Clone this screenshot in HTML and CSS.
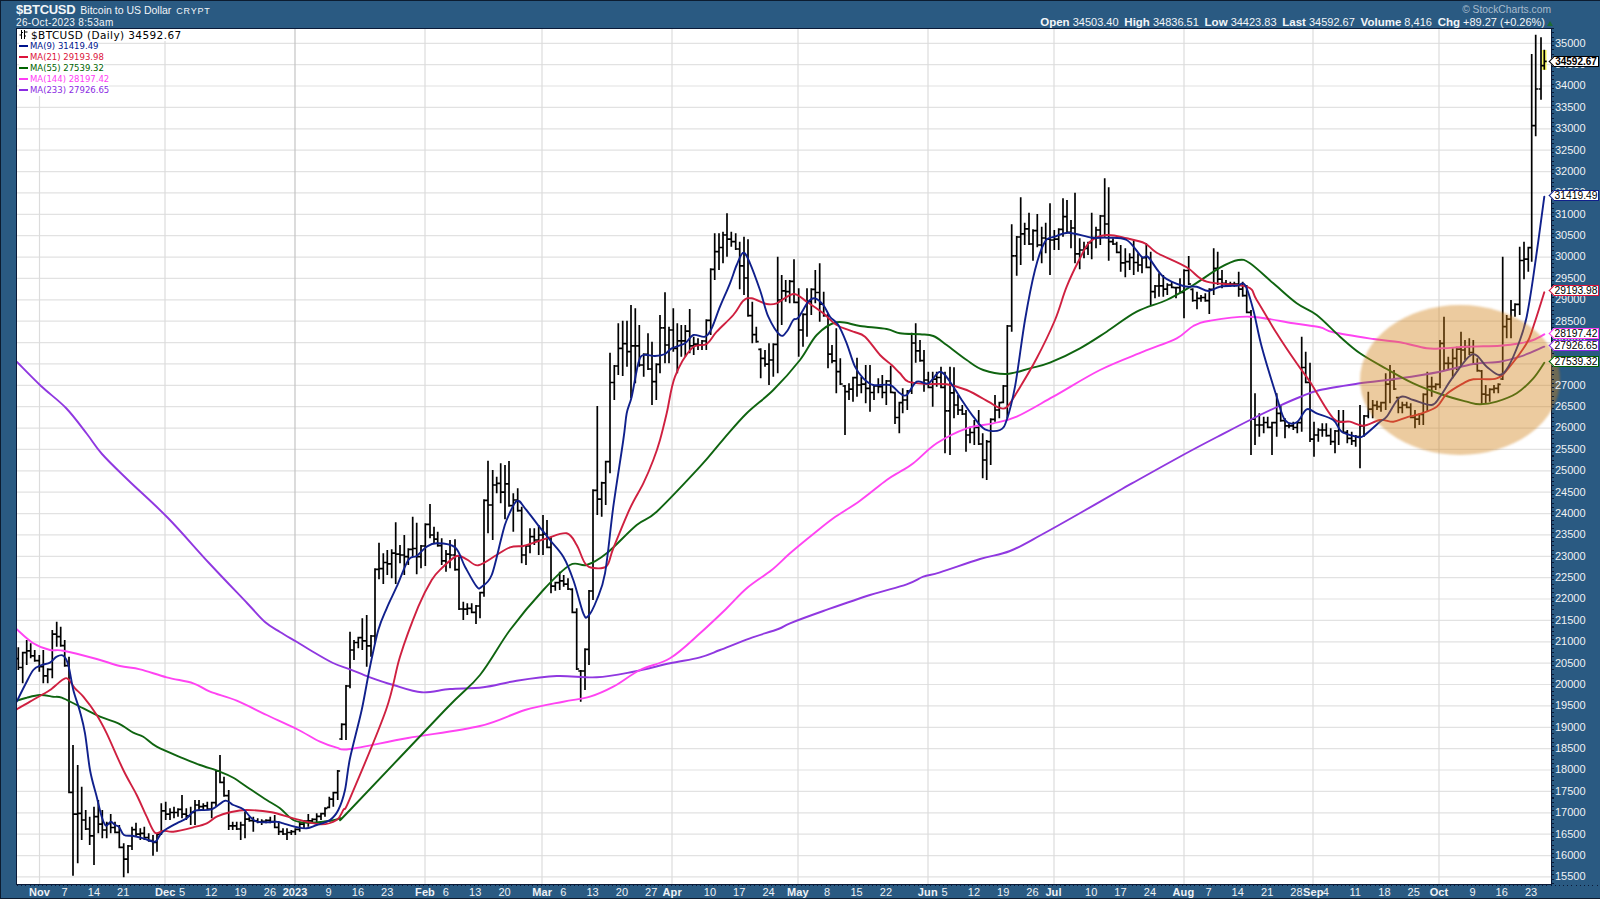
FILE: index.html
```html
<!DOCTYPE html>
<html lang="en">
<head>
<meta charset="utf-8">
<title>$BTCUSD</title>
<link rel="stylesheet" href="styles.css">
</head>
<body>
<div class="page">
  <header class="head">
    <div class="head-left">
      <div class="title"><b class="sym">$BTCUSD</b><span class="name">Bitcoin to US Dollar</span><span class="exch">CRYPT</span></div>
      <div class="date">26-Oct-2023 8:53am</div>
    </div>
    <div class="head-right">
      <div class="brand">© StockCharts.com</div>
      <div class="quote"><b>Open</b> 34503.40 <b>High</b> 34836.51 <b>Low</b> 34423.83 <b>Last</b> 34592.67 <b>Volume</b> 8,416 <b>Chg</b> +89.27 (+0.26%)<i class="up"></i></div>
    </div>
  </header>
  <main class="chart">
    <div class="plot">
      <svg id="chart" class="plot-svg" viewBox="17 29 1534 855" width="1534" height="855"></svg>
      <div class="legend">
        <div class="lg lg-main"><svg class="lg-icon" viewBox="0 0 9 9" width="9" height="9"><path d="M2.5 0V9M5.500 0V9M0.500 5H2.500M2.500 2.500H4M5.500 6H7M5.500 2H8.500" stroke="#000" fill="none"/></svg><span>$BTCUSD (Daily) 34592.67</span></div>
        <div class="lg c9"><i></i><span>MA(9) 31419.49</span></div>
        <div class="lg c21"><i></i><span>MA(21) 29193.98</span></div>
        <div class="lg c55"><i></i><span>MA(55) 27539.32</span></div>
        <div class="lg c144"><i></i><span>MA(144) 28197.42</span></div>
        <div class="lg c233"><i></i><span>MA(233) 27926.65</span></div>
      </div>
    </div>
    <div class="yaxis">
      <span>35000</span><span>34500</span><span>34000</span><span>33500</span><span>33000</span><span>32500</span><span>32000</span><span>31500</span>
      <span>31000</span><span>30500</span><span>30000</span><span>29500</span><span>29000</span><span>28500</span><span>28000</span><span>27500</span>
      <span>27000</span><span>26500</span><span>26000</span><span>25500</span><span>25000</span><span>24500</span><span>24000</span><span>23500</span>
      <span>23000</span><span>22500</span><span>22000</span><span>21500</span><span>21000</span><span>20500</span><span>20000</span><span>19500</span>
      <span>19000</span><span>18500</span><span>18000</span><span>17500</span><span>17000</span><span>16500</span><span>16000</span><span>15500</span>
      <div class="tag t-last">34592.67</div>
      <div class="tag t9">31419.49</div>
      <div class="tag t21">29193.98</div>
      <div class="tag t144">28197.42</div>
      <div class="tag t233">27926.65</div>
      <div class="tag t55">27539.32</div>
    </div>
  </main>
  <div class="xaxis" id="xaxis"></div>
  <div class="highlight"></div>
</div>
<script src="chart.js"></script>
</body>
</html>
```
FILE: styles.css
```css
* { box-sizing: border-box; }
html, body { margin: 0; padding: 0; background: #fff; }
body { font-family: "Liberation Sans", Arial, sans-serif; }
.page {
  position: relative;
  width: 1600px;
  height: 899px;
  background: #2a5a82;
  border-top: 1px solid #0c1c30;
  border-left: 1px solid #0c1c30;
  border-bottom: 1px solid #0c1c30;
  color: #f2f5f8;
  overflow: hidden;
  display: flex;
  flex-direction: column;
}
.head {
  height: 27px;
  padding: 0 47px 0 15px;
  display: flex;
  justify-content: space-between;
}
.head-left, .head-right { display: flex; flex-direction: column; }
.head-right { align-items: flex-end; }
.title { display: flex; align-items: baseline; height: 16px; line-height: 17px; }
.sym { font-size: 13px; letter-spacing: -.3px; }
.name { font-size: 10.500px; margin-left: 5px; }
.exch { font-size: 9px; margin-left: 5px; letter-spacing: .75px; }
.date { font-size: 10px; letter-spacing: .33px; line-height: 11px; }
.brand { font-size: 10.300px; height: 15px; line-height: 18px; color: #a9bccd; padding-right: 2px; }
.quote { font-size: 11px; line-height: 12px; white-space: pre; }
.quote b { font-size: 11.500px; margin-left: 2.700px; }
.up {
  display: inline-block;
  width: 0; height: 0;
  margin-left: 2px;
  border-left: 3.500px solid transparent;
  border-right: 3.500px solid transparent;
  border-bottom: 5px solid #1d6b35;
}
.chart { display: flex; padding-left: 15px; height: 857px; }
.plot {
  position: relative;
  width: 1536px;
  height: 857px;
  border: 1px solid #0a1a38;
  background: #fff;
  flex: none;
}
.plot-svg { display: block; }
.legend {
  position: absolute;
  left: 2px;
  top: 0;
  display: flex;
  flex-direction: column;
  align-items: flex-start;
  font-family: "DejaVu Sans", Verdana, sans-serif;
  font-size: 8.500px;
}
.lg { display: flex; align-items: center; height: 11px; gap: 2px; background: #fff; }
.lg i { width: 9px; height: 2px; display: block; }
.lg-main { font-size: 10.500px; letter-spacing: .4px; height: 11.500px; color: #000; gap: 3px; }
.lg-icon { display: block; }
.c9 { color: #00148c; } .c9 i { background: #00148c; }
.c21 { color: #dc143c; } .c21 i { background: #dc143c; }
.c55 { color: #006400; } .c55 i { background: #006400; }
.c144 { color: #ff3cf5; } .c144 i { background: #ff3cf5; }
.c233 { color: #8a2be2; } .c233 i { background: #8a2be2; }
.yaxis {
  position: relative;
  z-index: 2;
  width: 48px;
  padding: 4.700px 0 0 3px;
  display: flex;
  flex-direction: column;
  font-size: 11px;
  color: #eef2f6;
  background-image: repeating-linear-gradient(to bottom, #0a1a38 0 1px, transparent 1px 4.275px);
  background-size: 2px 100%;
  background-repeat: no-repeat;
}
.yaxis span { height: 21.375px; line-height: 21.375px; display: block; flex: none; }
.tag {
  position: absolute;
  z-index: 1;
  left: 1px;
  width: 46px;
  height: 11px;
  line-height: 9px;
  font-size: 10.300px;
  color: #000;
  background: #fff;
  border: 1px solid;
  text-align: center;
}
.tag::before {
  content: "";
  position: absolute;
  z-index: -1;
  left: -4px;
  top: 1px;
  width: 6px;
  height: 6px;
  background: #fff;
  border-left: 1px solid;
  border-bottom: 1px solid;
  border-color: inherit;
  transform: rotate(45deg);
}
.t-last { top: 28px; font-weight: bold; font-size: 10px; border-color: #000; }
.t9 { top: 162px; border-color: #10208c; }
.t21 { top: 257px; border-color: #dc143c; }
.t144 { top: 300px; border-color: #ff3cf5; }
.t233 { top: 312px; border-color: #8a2be2; }
.t55 { top: 328px; border-color: #006400; }
.xaxis {
  position: relative;
  height: 14px;
  font-size: 11px;
  color: #eef2f6;
  background-image: repeating-linear-gradient(to right, #0a1a38 0 1px, transparent 1px 4.190px);
  background-size: 100% 1px;
  background-repeat: no-repeat;
  background-position: 16px 0;
}
.xaxis span { position: absolute; top: 0; transform: translateX(-50%); line-height: 14px; letter-spacing: .1px; }
.xaxis .m { font-weight: bold; }
.highlight {
  position: absolute;
  left: 1359px;
  top: 304px;
  width: 200px;
  height: 150px;
  border-radius: 50%;
  background: rgba(209,128,23,.41);
  filter: blur(1px);
  z-index: 1;
}
.grid { stroke: #e2e2e2; stroke-width: 1.200; }
.grid-v { stroke: #dcdcdc; }
.grid-y { stroke: #c4c4c4; }
.bars { stroke: #000; stroke-width: 1.700; fill: none; }
.ma { fill: none; stroke-width: 1.900; stroke-linejoin: round; stroke-linecap: round; }
.ma9 { stroke: #10208c; }
.ma21 { stroke: #cf2040; }
.ma55 { stroke: #0f6410; }
.ma144 { stroke: #ff44f2; }
.ma233 { stroke: #9038e0; }
.lastmark { fill: #ffff66; }
```
FILE: chart.js
```js
const NS = "http://www.w3.org/2000/svg";
const svg = document.getElementById("chart");
function el(tag, cls, attrs) {
  const e = document.createElementNS(NS, tag);
  e.setAttribute("class", cls);
  for (const k in attrs) e.setAttribute(k, attrs[k]);
  svg.appendChild(e);
  return e;
}
/* horizontal grid: one line per 500 */
for (let p = 35000; p >= 15500; p -= 500) {
  const y = (43.3 + (35000 - p) * 0.04275).toFixed(1);
  el("line", "grid", { x1: 17, x2: 1551, y1: y, y2: y });
}
/* vertical grid: first of each month */
[39.5, 165, 425, 542, 672, 798, 928, 1054, 1184, 1313, 1439].forEach(x =>
  el("line", "grid grid-v", { x1: x, x2: x, y1: 29, y2: 884 }));
el("line", "grid grid-y", { x1: 295, x2: 295, y1: 29, y2: 884 });
el("rect", "lastmark", { x: 1542, y: 50, width: 4.6, height: 20 });

/* bars: x,high,low[,close] read per section */
const S = [
 [0,590,"55,172,240 68,185,280 80,150,225 92,160,205 104,180,215 118,195,245 130,180,280 143,235,280 157,120,265 170,95,170 182,110,170 194,150,230 207,200,610 219,465,857 233,525,820 245,590,750 257,660,720 269,680,765 282,650,825 295,630,730 307,660,745 320,695,745 332,672,730 345,695,730 358,705,775 371,760,862 384,765,850 396,710,780 408,698,740 421,715,750 433,710,750 446,730,755 459,735,797 471,730,785 484,640,735 497,635,690 510,655,690 522,650,685 534,655,680 546,615,685 559,655,690 572,650,705 585,630,705 597,630,660 610,640,660 622,635,660 635,635,685 648,540,650 660,495,580 672,560,620 686,600,720 698,695,720 710,695,720 722,695,750 735,665,745 748,680,695 760,680,725 773,685,700 785,688,705 798,688,700 811,680,700 824,675,715 836,695,735 849,715,735 861,715,750 874,720,735 886,715,735 899,695,725 912,690,715 925,672,710 937,685,700 950,670,700 963,668,690 975,652,680 988,620,655 1000,605,650 1013,540,630 1025,400,450 1038,285,450"],
 [350,440,"0,575,745 12,600,660 25,590,625 37,535,630 50,525,680 63,585,650 75,385,610 87,308,418 100,340,432 112,330,405 125,328,415 137,247,432 150,315,370 163,285,405 175,325,375 188,230,350 200,248,403 213,315,385 226,250,378 240,192,295 252,260,310 263,275,320 275,295,375 288,330,395 300,300,385 315,298,392 327,345,510 340,485,540 352,490,525 365,490,520 378,495,552 390,455,535 402,178,470 414,62,280 428,90,300 440,110,160 452,70,190 465,75,238 477,63,200 490,160,275 503,145,215 515,200,370 528,315,375 540,265,340 553,265,315 566,255,345 579,225,345 591,240,325 603,290,460 616,425,452 629,395,450 641,405,440 654,415,450 667,445,520 680,505,690 692,690,785 705,625,750 717,450,675 729,148,480 742,-102,225 755,125,230 767,62,195 780,-262,100"],
 [560,200,"163,495,600 175,370,525 188,362,528 201,362,500 213,315,595 226,325,550 238,375,500 251,460,530 264,400,510 276,425,615 289,490,600 300,345,520 315,277,490 327,380,490 340,325,455 352,370,520 364,375,470 376,375,470 389,327,460 401,410,465 414,415,450 426,420,450 439,358,450 452,205,405 464,100,240 477,100,210 489,95,190 501,40,170 514,95,140 527,100,150 539,125,268 552,110,285 564,118,350 577,305,430 589,380,428 602,445,535 615,450,500 627,430,555 640,430,530 653,170,520 665,225,375 677,240,305 689,240,310 702,178,310 716,265,470 729,340,440 741,265,410 754,265,345 766,210,310 779,190,365 791,275,350 804,340,505 816,435,490 829,385,580 841,475,555 855,555,705 867,550,600 879,530,605 891,473,590 904,530,580 917,495,610 930,495,635 942,555,600 955,535,580 967,525,595 979,540,615 992,497,580 1005,575,672 1018,605,700"],
 [900,170,"8,655,730 22,660,720 35,488,672 47,460,578 60,510,575 72,540,665 85,605,655 98,605,710 110,605,650 123,590,655 135,605,850 150,590,855 162,592,745 174,675,735 187,705,735 198,720,845 210,770,820 223,750,825 236,720,825 248,790,925 260,810,930 272,745,885 285,675,755 298,695,745 310,645,700 322,465,745 335,163,485 350,198,317 362,82,285 374,158,225 387,128,225 399,178,272 412,132,232 425,170,280 437,158,250 450,100,315 463,180,240 476,175,240 489,85,200 501,90,190 513,150,235 525,68,280 539,205,298 552,215,265 564,215,255 575,128,268 588,170,235 601,135,225 614,25,200 626,52,272 639,205,225 650,215,250 662,225,305 676,235,322 689,250,300 701,210,315 714,250,305 726,260,310 739,220,295 752,245,405 765,345,385 777,310,380 790,315,380 802,340,375 815,335,355 828,350,385 840,325,370 852,298,445 866,258,345 878,355,395 891,365,418 903,375,395 916,370,395 928,355,432 941,235,375 953,245,345 966,300,355 978,330,350 991,335,350 1003,335,350 1016,305,380 1028,335,380 1040,345,430 1053,420,855 1065,670,825 1078,730,800 1091,740,790 1103,740,775 1116,755,855 1130,670,800 1142,705,755 1155,745,805 1167,760,775 1180,755,780 1192,755,790"],
 [1300,170,"5,500,785 17,545,640 30,578,816 42,755,860 55,775,815 67,760,800 79,760,800 92,775,825 105,780,850 116,720,825 130,720,790 142,780,820 155,785,825 167,795,830 180,705,895 192,735,800 205,665,745 218,690,745 231,692,720 243,695,725 257,610,720 270,585,700 282,600,660 295,680,730 307,695,730 320,695,715 332,700,745 345,720,775 358,730,765 370,670,765 382,605,725 395,620,680 407,640,660 420,510,655 432,440,600 445,560,600 458,535,625 470,530,600 483,485,590 495,510,570 508,505,555 520,510,585 532,565,605 545,600,705 557,645,700 569,655,695 582,645,670 595,640,670 608,260,630 620,435,505 633,390,505 645,400,440 659,230,435 672,215,328 685,230,305 695,-348,275,-133"],
 [1515,28,"62,20,325,183 78,28,215,113 88,65,125,100"]
];
const bars = [];
S.forEach(([x0, y0, s]) => s.split(" ").forEach(t => {
  const v = t.split(",").map(Number);
  const b = { x: x0 + v[0] / 3, h: y0 + v[1] / 3, l: y0 + v[2] / 3 };
  if (v.length > 3) b.c = y0 + v[3] / 3;
  bars.push(b);
}));
const clamp = (v, a, b) => Math.min(Math.max(v, a), b);
bars.forEach((b, i) => {
  if (b.c === undefined) {
    const n = bars[i + 1];
    b.c = clamp((n.h + n.l) / 2, b.h + 1, b.l - 1);
  }
});
let d = "";
bars.forEach((b, i) => {
  const o = i ? clamp(bars[i - 1].c, b.h + 1, b.l - 1) : (b.h + b.l) / 2;
  const x = b.x.toFixed(1);
  d += `M${x} ${b.h.toFixed(1)}V${b.l.toFixed(1)}M${(b.x - 2.4).toFixed(1)} ${o.toFixed(1)}H${x}M${x} ${b.c.toFixed(1)}H${(b.x + 2.4).toFixed(1)}`;
});
el("path", "bars", { d });

/* moving averages: sections of x,y points */
const MA = {
 ma233: [
  [0,0,"17,362 41,386 66,408 87,434 102,454 128,480 168,518 209,563 247,603 265,622 280,632 297,642 310,650 333,663",1],
  [350,440,"0,688 60,712 130,735 215,757 300,747 400,742 500,722 620,708 740,712 850,695 960,670 1050,652"],
  [700,430,"60,660 150,625 235,597 270,580 370,543 510,495 620,463 670,440 720,427"],
  [0,0,"980,559 1010,551 1041,535 1082,512 1122,489 1138,480 1183,455 1217,437 1250,420 1277,407 1300,397",1],
  [1300,170,"60,660 180,640 300,625 420,605 520,582 600,575 660,560 733,530"]
 ],
 ma144: [
  [0,590,"50,118 100,160 150,180 190,182 290,207 360,228 420,238 500,262 580,280 630,305 710,332 800,375 890,417 960,455 1010,473 1050,477"],
  [0,0,"408,738 480,726",1],
  [350,440,"525,810 640,785 720,770 790,740 870,690 960,655 1050,580"],
  [700,430,"80,535 140,475 215,420 270,370 340,312 400,265 480,212 560,150"],
  [900,170,"0,905 40,880 110,820 200,775 280,760 350,740 460,680 600,600 730,545 830,505 880,468 930,452 1050,440 1180,460 1260,472"],
  [1300,170,"100,487 220,507 300,517 380,535 430,535 500,530 600,527 660,520 700,510 733,493"]
 ],
 ma55: [
  [0,590,"50,332 80,323 120,315 160,320 185,323 230,345 300,380 355,400 400,428 430,440 470,470 550,505 600,525 660,545 700,563 750,597 800,630 840,655 880,690 920,698 970,695 1020,685 1050,660"],
  [350,440,"285,810 390,705 480,570 580,450 660,375 710,375 770,340 860,255 920,215 1050,80"],
  [560,200,"490,718 560,640 640,570 720,480 770,405 830,367 900,378 980,387"],
  [900,170,"0,490 60,493 100,498 140,525 200,570 250,600 320,612 390,595 450,578 540,535 620,485 710,425 800,390 880,345 960,293 1015,270 1050,280 1120,340 1190,400"],
  [1300,170,"50,435 120,500 180,550 260,597 340,640 430,675 500,695 540,703 590,695 650,670 700,625 733,578"]
 ],
 ma21: [
  [0,590,"50,358 90,335 130,312 150,300 190,268 205,268 225,295 250,320 290,375 320,430 370,540 410,615 440,680 465,728 490,722 520,725 580,712 620,700 650,680 690,667 740,660 815,667 880,685 960,703 1010,690 1030,660 1050,625"],
  [350,440,"108,810 150,650 205,500 245,420 275,385 320,348 350,358 385,376 440,345 480,322 520,318 540,312 590,295 650,280 680,315 705,370 730,384 770,378 790,325 840,205 880,130 910,60 930,0"],
  [560,200,"320,640 345,530 395,445 440,432 470,395 520,345 550,302 575,295 620,312 650,310 700,282 740,305 790,340 830,375 880,395 915,410 960,465 995,495"],
  [900,170,"0,610 25,635 80,642 140,643 200,660 265,695 295,712 320,712 355,660 410,565 465,450 500,350 540,265 570,215 620,195 680,205 735,220 770,248 860,292 920,335 1040,350 1070,390 1130,490 1190,580"],
  [1300,170,"30,635 100,745 150,755 190,767 240,750 280,755 320,742 360,732 410,710 440,672 490,640 520,628 590,625 625,595 680,520 700,470 733,367"]
 ],
 ma9: [
  [0,590,"50,335 75,285 100,240 125,225 150,218 170,200 190,197 205,225 220,300 240,365 255,430 270,540 290,620 305,680 318,707 332,695 345,705 358,712 372,735 400,738 430,745 465,755 480,735 495,720 530,700 560,685 585,662 635,658 675,632 700,645 730,658 750,680 770,695 800,697 830,695 850,700 885,710 920,715 950,705 990,690 1015,660 1035,600 1050,505"],
  [350,440,"35,810 60,680 85,570 110,505 140,440 175,360 200,348 230,320 260,310 315,322 345,380 380,440 395,440 425,405 455,290 470,240 500,183 525,205 560,250 600,300 640,350 670,420 700,520 715,528 740,480 765,400 790,200 820,0"],
  [560,200,"200,640 215,590 235,490 250,465 285,468 315,462 335,445 375,430 400,405 435,410 455,385 480,320 510,250 530,195 550,158 570,190 600,270 625,350 660,405 680,395 700,360 715,353 745,305 765,295 790,315 810,350 835,375 860,430 885,500 910,535 940,555 990,555"],
  [900,170,"0,670 20,675 50,635 85,640 120,605 150,635 185,690 220,740 255,778 300,780 320,750 345,650 375,450 405,300 435,215 465,200 505,188 575,203 620,203 680,210 725,260 745,262 790,320 850,348 890,350 925,363 960,350 1010,347 1035,345 1060,420 1085,530 1130,680 1155,750 1190,757"],
  [1300,170,"20,718 50,730 100,750 125,785 170,800 190,798 240,755 260,740 300,682 340,690 395,705 420,680 460,620 517,553 560,590 598,615 625,590 660,510 680,440 700,320 733,80"]
 ]
};
for (const k in MA) {
  const p = [];
  MA[k].forEach(([x0, y0, s, sc]) => {
    const f = sc || 3;
    s.split(" ").forEach(t => {
      const [a, b] = t.split(",").map(Number);
      p.push([x0 + a / f, y0 + b / f]);
    });
  });
  /* smooth curve through the read points */
  let path = `M${p[0][0].toFixed(1)} ${p[0][1].toFixed(1)}`;
  for (let i = 0; i < p.length - 1; i++) {
    const a = p[Math.max(i - 1, 0)], b = p[i], c = p[i + 1], e = p[Math.min(i + 2, p.length - 1)];
    const c1x = b[0] + (c[0] - a[0]) / 6, c1y = b[1] + (c[1] - a[1]) / 6;
    const c2x = c[0] - (e[0] - b[0]) / 6, c2y = c[1] - (e[1] - b[1]) / 6;
    path += `C${c1x.toFixed(1)} ${c1y.toFixed(1)} ${c2x.toFixed(1)} ${c2y.toFixed(1)} ${c[0].toFixed(1)} ${c[1].toFixed(1)}`;
  }
  el("path", "ma " + k, { d: path });
}

/* date axis: labels are placed from their date */
const ax = document.getElementById("xaxis");
const t0 = Date.UTC(2022, 10, 1);
[["Nov",2022,10,1,1],["7",2022,10,7],["14",2022,10,14],["21",2022,10,21],["Dec",2022,11,1,1],["5",2022,11,5],["12",2022,11,12],["19",2022,11,19],["26",2022,11,26],
 ["2023",2023,0,1,1],["9",2023,0,9],["16",2023,0,16],["23",2023,0,23],["Feb",2023,1,1,1],["6",2023,1,6],["13",2023,1,13],["20",2023,1,20],["Mar",2023,2,1,1],["6",2023,2,6],["13",2023,2,13],["20",2023,2,20],["27",2023,2,27],
 ["Apr",2023,3,1,1],["10",2023,3,10],["17",2023,3,17],["24",2023,3,24],["May",2023,4,1,1],["8",2023,4,8],["15",2023,4,15],["22",2023,4,22],["Jun",2023,5,1,1],["5",2023,5,5],["12",2023,5,12],["19",2023,5,19],["26",2023,5,26],
 ["Jul",2023,6,1,1],["10",2023,6,10],["17",2023,6,17],["24",2023,6,24],["Aug",2023,7,1,1],["7",2023,7,7],["14",2023,7,14],["21",2023,7,21],["28",2023,7,28],["Sep",2023,8,1,1],["4",2023,8,4],["11",2023,8,11],["18",2023,8,18],["25",2023,8,25],
 ["Oct",2023,9,1,1],["9",2023,9,9],["16",2023,9,16],["23",2023,9,23]
].forEach(([txt, y, m, d, bold]) => {
  const days = (Date.UTC(y, m, d) - t0) / 864e5;
  const s = document.createElement("span");
  s.textContent = txt;
  if (bold) s.className = "m";
  s.style.left = (38.5 + 4.19 * days).toFixed(1) + "px";
  ax.appendChild(s);
});
```
